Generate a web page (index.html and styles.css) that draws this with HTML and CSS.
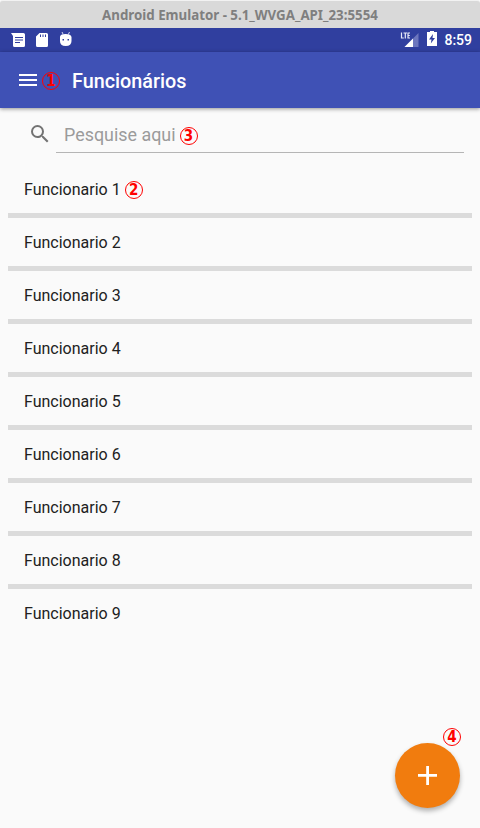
FILE: index.html
```html
<!DOCTYPE html>
<html lang="pt-BR">
<head>
<meta charset="utf-8">
<title>Funcionários</title>
<link rel="stylesheet" href="styles.css">
</head>
<body>
<div class="window">
  <div class="titlebar">Android Emulator - 5.1_WVGA_API_23:5554</div>
  <div class="statusbar">
    <svg class="notifications" width="64" height="24" viewBox="0 0 64 24">
      <path fill="#fff" fill-rule="evenodd" d="M0 5H12.4Q14 5 14 6.5V17.500Q14 19 12.500 19H3.500Q2 19 2 17.500V8ZM4 9V10H12V9ZM4 11.500V12.500H12V11.500ZM4 14V15H9V14Z"/>
      <path fill="#fff" fill-rule="evenodd" d="M28.500 5H35.500Q37 5 37 6.500V17.500Q37 19 35.500 19H26.500Q25 19 25 17.500V8.500ZM29 6.500V9H30V6.500ZM31.500 6.500V9H32.500V6.500ZM34 6.500V9H35V6.500Z"/>
      <path fill="#fff" fill-rule="evenodd" d="M49 9Q49 6 54.500 6T60.500 9V13Q60.500 18 54.700 18T49 13ZM51.500 11V12.500H53V11ZM56.500 11V12.500H58V11Z"/>
      <path stroke="#d4d7ef" fill="none" d="M51 4L52.500 7M58.500 4L57 7"/>
    </svg>
    <div class="system">
      <svg width="38" height="24" viewBox="0 0 38 24">
        <path fill="#6c76be" d="M18.500 5V19H4.500Z"/>
        <path fill="#fff" d="M13 10.500V19H4.500Z"/>
        <path fill="none" stroke="#e8eaf7" stroke-width="1.200" d="M1.500 4.500V10H3.800M3.500 5H7M5.300 5V10.500M10 5H8V10H10M8 7.500H9.800"/>
        <path fill="#fff" d="M27 4H30V3H34V4H37V18H27V4Z"/>
        <path fill="#303f9f" d="M33 6L29 11.500H31.500L30.800 15.500L35 10H32.500Z"/>
      </svg>
      <span class="clock">8:59</span>
    </div>
  </div>
  <header class="toolbar">
    <svg class="menu" width="18" height="12" viewBox="0 0 18 12"><path fill="#fff" d="M0 0H18V2H0ZM0 5H18V7H0ZM0 10H18V12H0Z"/></svg>
    <span class="mark mark-menu">1</span>
    <h1>Funcionários</h1>
  </header>
  <div class="search">
    <svg width="24" height="24" viewBox="0 0 24 24"><path fill="#737373" d="M15.500 14h-.79l-.28-.27A6.470 6.470 0 0 0 16 9.500 6.500 6.500 0 1 0 9.500 16c1.610 0 3.090-.59 4.230-1.570l.27.28v.79l5 4.990L20.490 19zM9.500 14a4.500 4.500 0 1 1 0-9 4.500 4.500 0 0 1 0 9z"/></svg>
    <div class="field"><span class="hint">Pesquise aqui</span><span class="mark mark-search">3</span></div>
  </div>
  <ul class="list">
    <li>Funcionario 1<span class="mark mark-item">2</span></li>
    <li>Funcionario 2</li>
    <li>Funcionario 3</li>
    <li>Funcionario 4</li>
    <li>Funcionario 5</li>
    <li>Funcionario 6</li>
    <li>Funcionario 7</li>
    <li>Funcionario 8</li>
    <li>Funcionario 9</li>
  </ul>
  <div class="fab"><svg width="19" height="19" viewBox="0 0 19 19"><path fill="#fff" d="M8.200 0H11V8H19V10.800H11V19H8.200V10.800H0V8H8.200Z"/></svg></div>
  <span class="mark mark-fab">4</span>
</div>
</body>
</html>
```
FILE: styles.css
```css
* { box-sizing: border-box; }
body { margin: 0; font-family: Roboto, sans-serif; background: #fafafa; }
.window { position: relative; height: 828px; overflow: hidden; }
.titlebar {
  height: 28px;
  border-top: 1px solid #f2f2f2;
  border-radius: 3px 3px 0 0;
  background: #d9d9d9;
  color: #7f7f7f;
  font: bold 13.3px/28px "Noto Sans", sans-serif;
  text-align: center;
}
.statusbar {
  display: flex;
  justify-content: space-between;
  height: 24px;
  padding: 0 8px 0 11px;
  background: #303f9f;
}
.system { display: flex; gap: 6px; }
.clock { color: #fff; font-size: 14px; font-weight: 500; line-height: 25px; }
.toolbar {
  display: flex;
  align-items: center;
  position: relative;
  height: 56px;
  padding-left: 19px;
  background: #3f51b5;
  box-shadow: 0 1px 4px rgba(0, 0, 0, .42);
}
h1 { margin: 4px 0 0 12px; color: #fff; font-size: 19.8px; font-weight: 500; line-height: 24px; }
.mark {
  flex: none;
  width: 18px;
  height: 18px;
  border: 1px solid #f00;
  border-radius: 50%;
  color: #f00;
  font: bold 15px/17px "DejaVu Sans Condensed", "DejaVu Sans", sans-serif;
  font-stretch: condensed;
  text-align: center;
}
.mark-menu { margin: 2px 0 0 5px; }
.search { display: flex; height: 57px; padding: 14px 16px 0 28px; }
.field {
  display: flex;
  flex: 1;
  height: 31px;
  margin-left: 4px;
  padding-left: 8px;
  border-bottom: 1px solid #b5b5b5;
}
.hint { color: #9b9b9b; font-size: 17.9px; line-height: 26px; }
.mark-search { margin: 5px 0 0 4px; }
.list { margin: 0; padding: 0 8px; list-style: none; }
.list li {
  display: flex;
  height: 53px;
  padding-left: 16px;
  border-bottom: 5px solid #dbdbdb;
  color: #212121;
  font-size: 16px;
  line-height: 49px;
}
.list li:last-child { border-bottom: 0; }
.mark-item { margin: 16px 0 0 4px; }
.fab {
  display: flex;
  align-items: center;
  justify-content: center;
  position: absolute;
  left: 395px;
  top: 743px;
  width: 65px;
  height: 65px;
  border-radius: 50%;
  background: #f17c0e;
  box-shadow: 0 3px 5px rgba(0, 0, 0, .3);
}
.mark-fab { position: absolute; left: 443px; top: 728px; }
```
